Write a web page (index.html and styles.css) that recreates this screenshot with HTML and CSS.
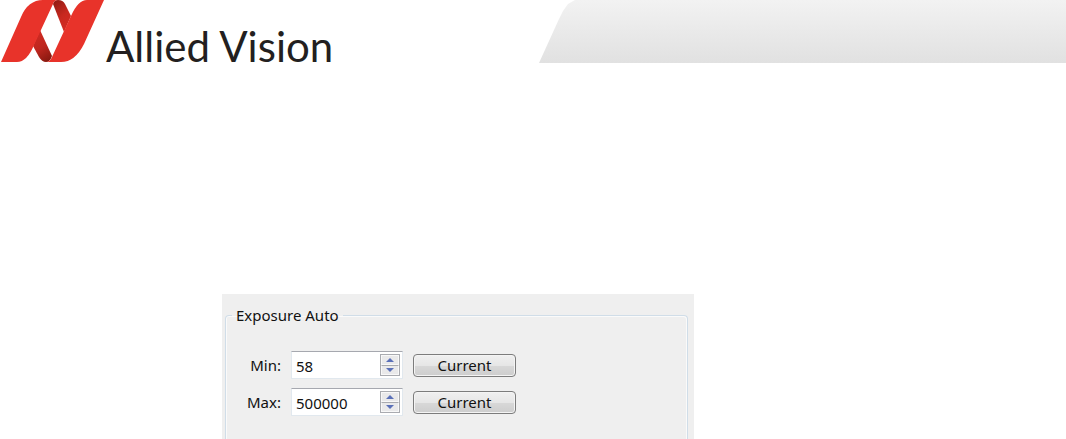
FILE: index.html
```html
<!doctype html>
<html lang="en">
<head>
  <meta charset="utf-8">
  <meta name="viewport" content="width=device-width, initial-scale=1">
  <title>Allied Vision</title>
  <link rel="stylesheet" href="styles.css">
</head>
<body>

  <header class="header">
    <div class="brand">
      <svg class="logo" viewBox="0 0 104 63" aria-hidden="true">
        <defs>
          <linearGradient id="foldTop" x1="0" y1="0" x2="0.5" y2="1">
            <stop offset="0" stop-color="#8c1a12"/>
            <stop offset="0.6" stop-color="#c8281f"/>
            <stop offset="1" stop-color="#d22b22"/>
          </linearGradient>
          <linearGradient id="foldBottom" x1="0.4" y1="0" x2="0.8" y2="1">
            <stop offset="0" stop-color="#d02a22"/>
            <stop offset="0.5" stop-color="#bd261e"/>
            <stop offset="1" stop-color="#84180f"/>
          </linearGradient>
        </defs>
        <path fill="url(#foldTop)" d="M53 4 Q54 0 58 0 Q63 0 65 4 L71 16 L64 32 Z"/>
        <path fill="url(#foldBottom)" d="M40 30 L52 56 Q50 62 46 62 Q42 62 39 57 L33 46 Z"/>
        <path fill="#e8332a" d="M1 62 L21 17 Q28 0 43 0 H58 Q54 0 53 4 L34 45 Q27 62 17 62 Z"/>
        <path fill="#e8332a" d="M46 62 Q50 62 52 57 L71 16 Q78 0 87 0 H104 L84 44 Q75 62 61 62 Z"/>
      </svg>
      <span class="name">Allied Vision</span>
    </div>
    <div class="banner"></div>
  </header>

  <main class="panel">
    <fieldset class="group">
      <legend>Exposure Auto</legend>
      <div class="row">
        <label for="min">Min:</label>
        <div class="spin">
          <input type="text" id="min" value="58">
          <div class="arrows">
            <button type="button" aria-label="Increase min"><svg viewBox="0 0 8 4"><path d="M0 4 L4 0 L8 4 Z"/></svg></button>
            <button type="button" aria-label="Decrease min"><svg viewBox="0 0 8 4"><path d="M0 0 L4 4 L8 0 Z"/></svg></button>
          </div>
        </div>
        <button type="button" class="current">Current</button>
      </div>
      <div class="row">
        <label for="max">Max:</label>
        <div class="spin">
          <input type="text" id="max" value="500000">
          <div class="arrows">
            <button type="button" aria-label="Increase max"><svg viewBox="0 0 8 4"><path d="M0 4 L4 0 L8 4 Z"/></svg></button>
            <button type="button" aria-label="Decrease max"><svg viewBox="0 0 8 4"><path d="M0 0 L4 4 L8 0 Z"/></svg></button>
          </div>
        </div>
        <button type="button" class="current">Current</button>
      </div>
    </fieldset>
  </main>

</body>
</html>
```
FILE: styles.css
```css
* {
  box-sizing: border-box;
}
body {
  margin: 0;
  min-height: 100vh;
  display: flex;
  flex-direction: column;
  background: #fff;
  color: #111;
  font-family: Tahoma, "Noto Sans", sans-serif;
  font-size: 15px;
}
.header {
  display: flex;
  height: 63px;
}
.brand {
  display: flex;
  width: 539px;
}
.logo {
  width: 104px;
  height: 63px;
}
.name {
  padding-top: 16px;
  margin-left: 2px;
  font-family: Lato, "Noto Sans", sans-serif;
  font-size: 42px;
  line-height: 60px;
  color: #231f20;
  white-space: nowrap;
}
.banner {
  flex: 1;
  background: linear-gradient(#f2f2f2, #e1e1e1);
  clip-path: polygon(0 100%, 20px 19px, 24px 11px, 29px 4px, 36px 0, 100% 0, 100% 100%);
}
.panel {
  flex: 1;
  display: flex;
  width: 472px;
  margin: 231px 0 0 222px;
  padding: 10px 6px 0 3px;
  background: #efefef;
}
.group {
  flex: 1;
  min-width: 0;
  margin: 0;
  padding: 25px 0 0 12px;
  border: 1px solid #d0dde8;
  border-bottom: none;
  border-radius: 4px 4px 0 0;
  box-shadow: inset -1px 1px #fafafa, inset 1px 0 #fafafa;
}
legend {
  margin-left: -6px;
  padding: 0 4px;
  line-height: 22px;
}
.row {
  display: flex;
  align-items: center;
  margin-bottom: 9px;
}
label {
  width: 43px;
  text-align: right;
}
.spin {
  display: flex;
  width: 112px;
  height: 28px;
  margin: 0 10px;
  padding: 2px;
  background: #fff;
  border: 1px solid #e1e8ee;
  border-top-color: #a6a8af;
}
.spin input {
  flex: 1;
  min-width: 0;
  padding: 2px 0 0 2px;
  border: none;
  outline: none;
  background: none;
  color: inherit;
  font: inherit;
}
.arrows {
  display: flex;
  flex-direction: column;
  width: 20px;
  border: 1px solid #a9abb0;
}
.arrows button {
  flex: 1;
  display: flex;
  align-items: center;
  justify-content: center;
  padding: 0;
  border: 1px solid #f8f8f8;
  background: #e9e9ea;
}
.arrows button + button {
  border-top-color: #a9abb0;
}
.arrows svg {
  width: 8px;
  height: 4px;
  fill: #5a70b8;
}
.current {
  width: 103px;
  height: 23px;
  padding: 0;
  border: 1px solid #7c7c7c;
  border-radius: 4px;
  box-shadow: inset 0 0 0 1px #f4f4f4;
  background: linear-gradient(#f0f0f0, #e6e6e6 50%, #d8d8d8 51%, #cdcdcd);
  color: inherit;
  font: inherit;
  line-height: 20px;
}
```
